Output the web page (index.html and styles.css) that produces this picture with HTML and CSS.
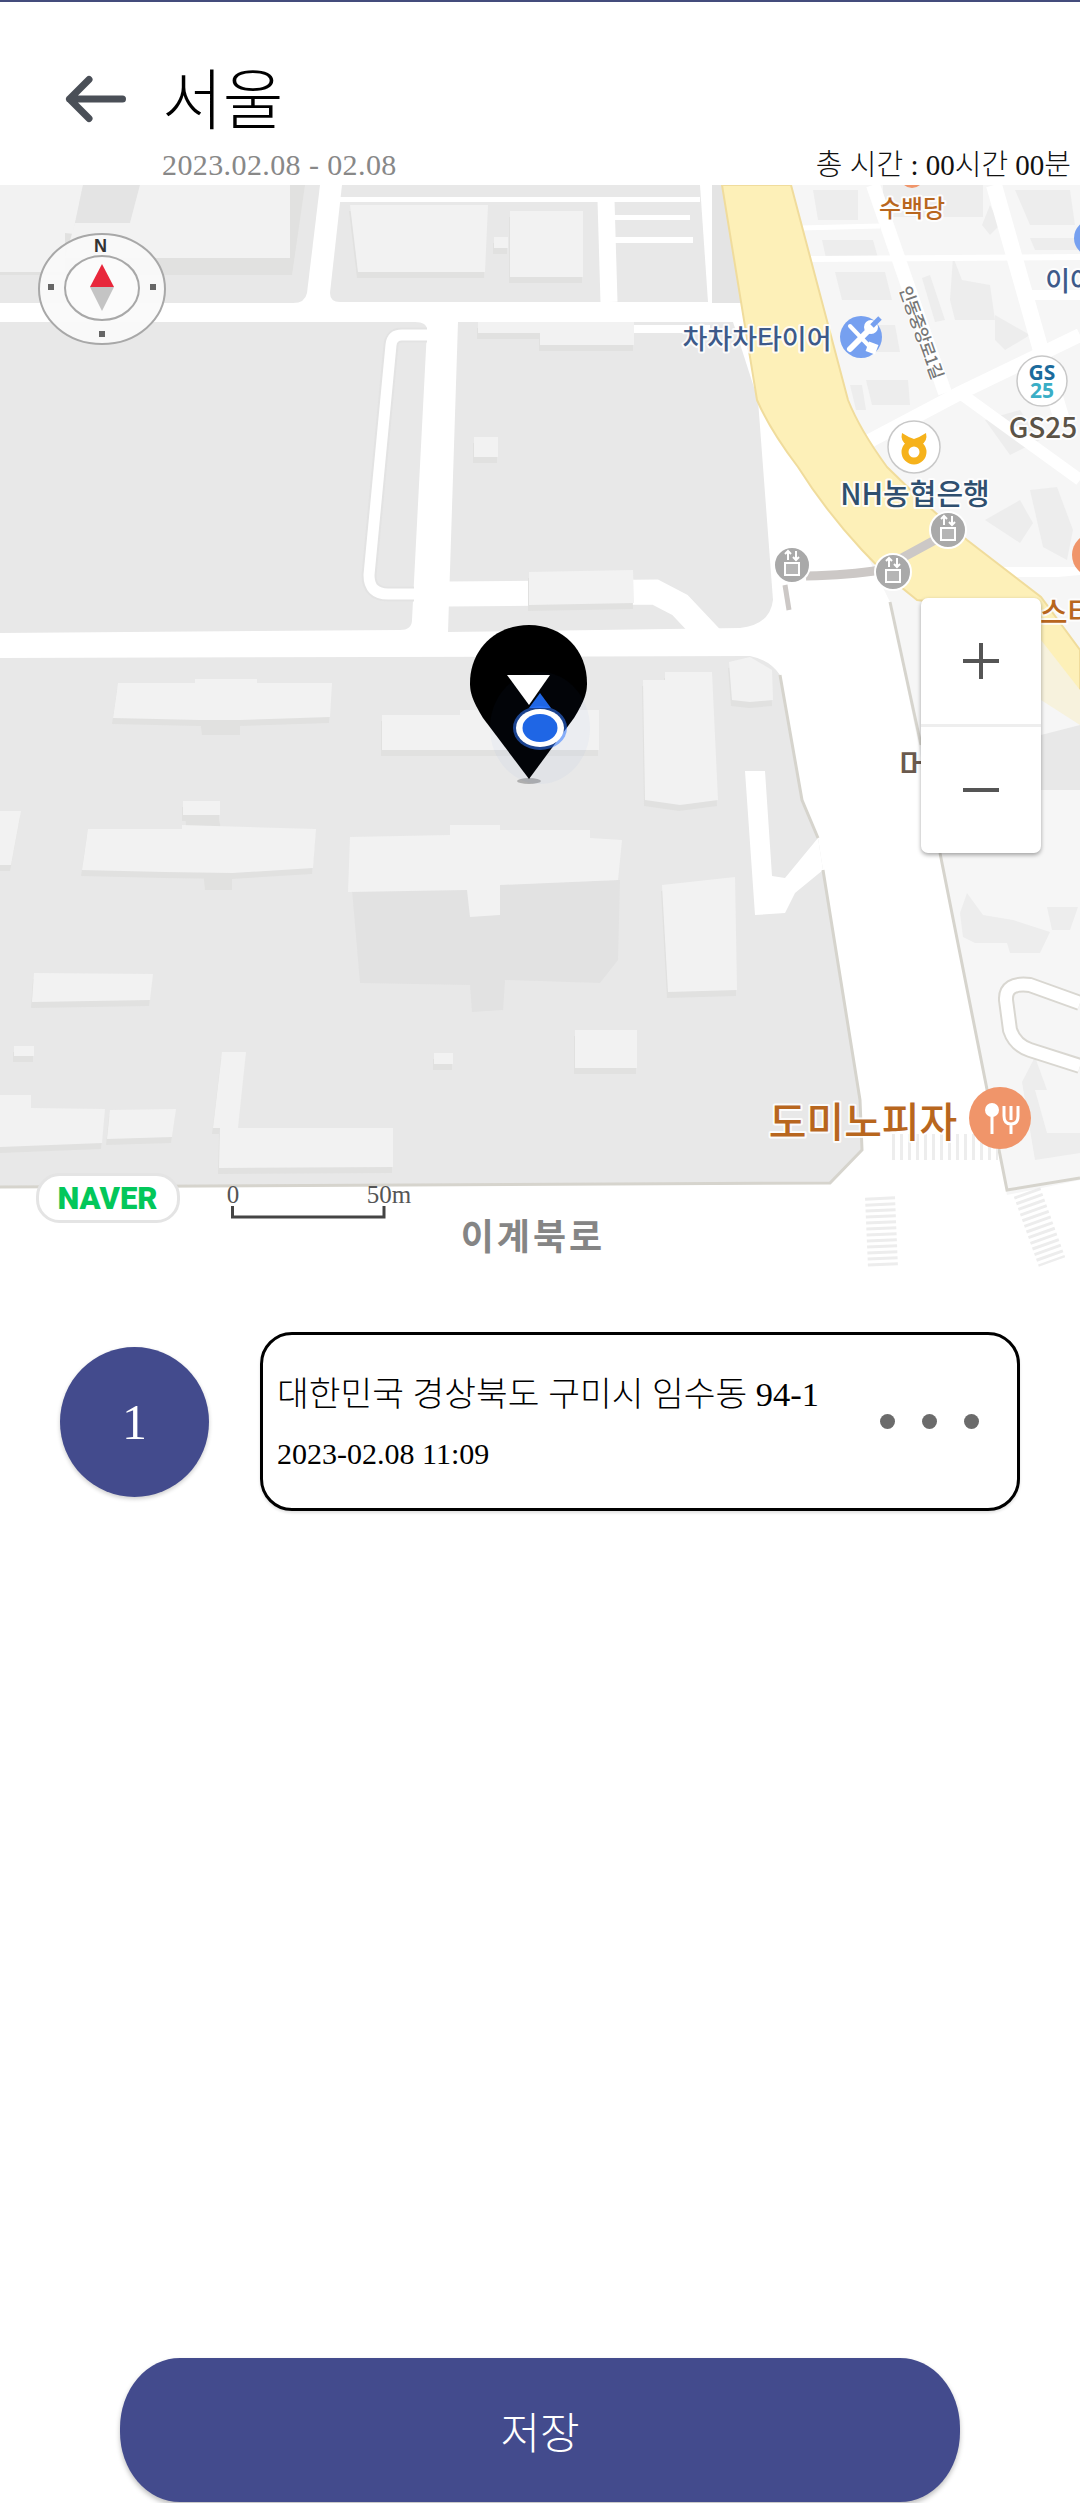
FILE: index.html
```html
<!DOCTYPE html>
<html lang="ko">
<head>
<meta charset="utf-8">
<title>서울</title>
<link rel="stylesheet" href="styles.css">
</head>
<body>
<div class="page">
  <header class="header">
    <div class="head-top">
      <svg class="back" viewBox="0 0 66 54" width="66" height="54"><path d="M6.500 27H59.500M26 7.500L6.500 27L26 46.500"/></svg>
      <h1 class="title">서울</h1>
    </div>
    <div class="head-sub">
      <span class="date">2023.02.08 - 02.08</span>
      <span class="total">총 시간 : 00시간 00분</span>
    </div>
  </header>

  <section class="map">
    <svg class="map-svg" viewBox="0 185 1080 1085" width="1080" height="1085">
      <defs>
        <g id="bds">
          <polygon points="118,683 195,683 195,679 257,679 257,683 332,683 330,717 240,720 200,720 113,718"/>
          <polygon points="382,715 460,715 460,710 599,710 599,750 382,750"/>
          <polygon points="183,801 220,801 220,815 183,815"/>
          <polygon points="88,829 182,829 182,825 316,829 313,868 232,873 165,872 82,870"/>
          <polygon points="0,811 21,811 11,865 0,865"/>
          <polygon points="643,680 665,680 665,672 712,672 718,800 680,805 645,800"/>
          <polygon points="729,662 750,657 772,670 773,700 750,702 732,700"/>
          <polygon points="662,885 735,877 737,990 668,992"/>
          <polygon points="34,973 153,974 150,1000 32,1002"/>
          <polygon points="14,1046 34,1046 34,1056 14,1056"/>
          <polygon points="434,1053 453,1053 453,1064 434,1064"/>
          <polygon points="575,1030 637,1030 637,1068 575,1068"/>
          <polygon points="222,1052 246,1052 238,1128 213,1128"/>
          <polygon points="0,1095 31,1095 31,1108 105,1109 102,1143 0,1147"/>
          <polygon points="110,1110 176,1109 172,1137 107,1139"/>
          <polygon points="220,1128 393,1128 393,1167 219,1168"/>
          <polygon points="474,437 498,437 498,457 474,457"/>
          <polygon points="529,572 633,570 634,603 529,605"/>
          <polygon points="478,322 634,322 634,345 540,345 540,333 478,333"/>
          <polygon points="350,205 488,205 485,272 358,272"/>
          <polygon points="510,211 583,211 583,277 560,277 510,277"/>
          <polygon points="494,237 508,237 508,248 494,248"/>
        </g>
        <g id="xfer">
          <circle class="xf-c" r="18"/>
          <rect class="xf-b" x="-7" y="-2" width="14" height="12"/>
          <path class="xf-a" d="M-4 -5V-14M-7 -11L-4 -14L-1 -11M4 -14V-5M1 -8L4 -5L7 -8"/>
        </g>
      </defs>

      <!-- blocks -->
      <path class="block" d="M0 185H320L307 293Q305 303 293 303H0Z"/>
      <path class="block" d="M342 185H700L708 302H340Q330 302 330 293Z"/>
      <rect class="strip" x="712" y="185" width="30" height="118"/>
      <path class="block" d="M0 322H415Q427 322 427 330L412 620Q412 630 400 630L0 633Z"/>
      <path class="block" d="M458 322H733L758 400L773 600Q770 625 740 628L448 632Z"/>
      <path class="block" d="M0 658L750 656Q770 660 780 675L802 800L818 838L823 870L860 1100L862 1150L830 1183L0 1186Z"/>

      <!-- left upper building -->
      <polygon class="bld" points="0,185 83,185 65,272 0,272"/>
      <polygon class="strip" points="83,185 140,185 130,223 75,223"/>
      <polygon class="shade" points="65,233 290,258 290,275 0,275 0,272 65,272"/>
      <polygon class="shade" points="290,185 305,185 292,275 285,275"/>
      <polygon class="bld" points="140,185 290,185 290,258 65,258 75,223 130,223"/>

      <!-- right district -->
      <polygon class="light" points="791,185 1080,185 1080,1180 1007,1195 940,853 890,602 800,420"/>
      <g class="grey">
        <rect x="883" y="185" width="100" height="32"/>
        <polygon points="813,190 858,190 858,220 818,220"/>
        <polygon points="822,240 873,240 878,258 826,258"/>
        <polygon points="835,272 885,272 892,300 842,300"/>
        <polygon points="848,325 895,325 900,352 855,352"/>
        <polygon points="866,380 908,380 910,405 872,405"/>
        <polygon points="850,385 862,385 866,410 856,410"/>
        <polygon points="953,257 962,280 990,285 995,320 955,320 950,300"/>
        <polygon points="930,275 945,320 935,322 922,278"/>
        <polygon points="995,315 1030,335 1005,350 995,340"/>
        <polygon points="990,205 1000,225 990,235 982,225"/>
        <polygon points="1015,190 1070,190 1075,225 1030,225"/>
        <polygon points="1030,238 1080,238 1080,250 1035,250"/>
        <polygon points="985,420 1020,410 1040,440 1010,455"/>
        <polygon points="1030,490 1057,487 1073,530 1067,560 1043,547"/>
        <polygon points="985,520 1020,500 1033,523 1020,543"/>
        <polygon points="960,913 967,893 983,915 1013,920 1050,932 1040,953 1010,953 1007,943 975,943 963,937"/>
        <polygon points="1047,907 1078,907 1070,930 1052,930"/>
        <polygon points="1022,1082 1035,1057 1047,1090 1035,1090 1047,1133 1080,1133 1080,1153 1035,1160"/>
      </g>
      <polygon class="block" points="1041,735 1080,725 1080,790 1041,790"/>
      <g class="road">
        <path class="r14" d="M873 185L945 393"/>
        <path class="r16" d="M994 185L1040 347L1062 420"/>
        <path class="r5" d="M800 228L880 226"/>
        <path class="r6" d="M810 259L1080 257"/>
        <path class="r10" d="M1030 295H1080"/>
        <path class="r14" d="M858 447L960 393L1080 335"/>
        <path class="r12" d="M960 393L1080 480"/>
        <path class="r10" d="M1000 572H1080"/>
      </g>
      <polygon class="light" points="1047,578 1080,575 1080,625 1050,625"/>
      <path class="loop-e" d="M1080 1003L1030 985Q1005 982 1006 1000L1010 1030Q1015 1045 1030 1050L1080 1066"/>
      <path class="loop" d="M1080 1003L1030 985Q1005 982 1006 1000L1010 1030Q1015 1045 1030 1050L1080 1066"/>

      <!-- yellow arterial -->
      <path class="yellow" d="M722 185H791L848 400Q860 430 887 467Q925 505 967 540L1041 597L1080 650V700L1000 610L917 600Q885 575 862 550Q825 510 798 467Q770 430 757 400Z"/>
      <polygon class="pale" points="1041,640 1080,690 1080,725 1041,700"/>

      <!-- white roads over blocks -->
      <g class="road">
        <path class="r5" d="M340 199.500H700"/>
        <path class="r17" d="M606 200L609 302"/>
        <path class="r5" d="M610 217.500H690"/>
        <path class="r6" d="M610 240H693"/>
        <path class="r8" d="M634 329H710"/>
      </g>
      <path class="narrow-e" d="M427 335H402Q392 335 391 345L369 575Q369 594 388 594H414"/>
      <path class="narrow" d="M427 335H402Q392 335 391 345L369 575Q369 594 388 594H414"/>
      <path class="wide" d="M448 594L655 592L680 605L713 640"/>
      <polygon class="white" points="745,771 765,771 772,876 785,878 818,838 823,870 795,893 785,913 755,915"/>

      <!-- buildings -->
      <use class="shade" href="#bds" transform="translate(-1 6)"/>
      <polygon class="shade" points="200,720 240,720 240,735 202,735"/>
      <polygon class="shade" points="185,815 218,815 224,843 188,843"/>
      <polygon class="shade" points="203,870 232,870 232,890 205,890"/>
      <polygon class="dark" points="352,890 620,880 618,960 600,983 505,980 503,1010 472,1012 470,985 360,983"/>
      <use class="bld" href="#bds"/>
      <polygon class="bld" points="350,837 450,835 450,825 500,825 500,830 590,830 590,838 622,840 618,880 500,885 500,915 470,917 467,890 348,892"/>

      <!-- edges -->
      <path class="edge" d="M823 870L860 1100L862 1150L830 1183L0 1187"/>
      <path class="edge" d="M940 853L1007 1190L1080 1178"/>
      <path class="edge" d="M780 675L802 800L818 838"/>
      <path class="edge" d="M890 602L921 745"/>
      <path class="edge-t" d="M785 585L789 610"/>

      <!-- crossings -->
      <path class="cross-v" d="M892 1147H998"/>
      <path class="cross-h" d="M880 1197L883 1268"/>
      <path class="cross-d" d="M1027 1192L1052 1262"/>

      <!-- poi -->
      <circle class="orange" cx="912" cy="176" r="12"/>
      <circle class="bluepoi" cx="1092" cy="238" r="18"/>
      <circle class="orange" cx="1094" cy="555" r="22"/>
      <path class="xfer-line" d="M806 576Q850 575 880 570L935 540"/>
      <use href="#xfer" x="792" y="565"/>
      <use href="#xfer" x="893" y="572"/>
      <use href="#xfer" x="948" y="530"/>

      <circle class="bluepoi" cx="861" cy="337" r="21"/>
      <path class="tool-s" d="M850 326L870 347"/>
      <path class="tool" d="M850 349L868 331"/>
      <circle class="wfill" cx="871" cy="327" r="7"/>
      <path class="tool-n" d="M872 326L880 318"/>
      <rect class="wfill" x="867" y="343" width="10" height="10" transform="rotate(20 872 348)"/>

      <circle class="poi-w" cx="1042" cy="381" r="25"/>
      <text class="gs1" x="1042" y="380">GS</text>
      <text class="gs2" x="1042" y="398">25</text>

      <circle class="poi-w" cx="914" cy="447" r="26"/>
      <circle class="nh" cx="914" cy="452" r="9"/>
      <path class="nh-f" d="M902 433Q908 437 914 439Q920 437 926 433Q928 441 921 445H907Q900 441 902 433Z"/>

      <circle class="orange" cx="1000" cy="1118" r="31"/>
      <ellipse class="wfill" cx="992" cy="1110" rx="7" ry="7"/>
      <path class="wline" d="M992 1112V1134M1011 1124V1134M1004 1106V1116Q1004 1124 1011 1124Q1018 1124 1018 1116V1106M1011 1106V1120"/>

      <!-- labels -->
      <text class="lbl org s23" x="912" y="217">수백당</text>
      <text class="lbl nav s25" x="757" y="349">차차차타이어</text>
      <text class="lbl nav s25" x="1070" y="291">이어</text>
      <text class="lbl road-n" transform="translate(899 289) rotate(70)">인동중앙로1길</text>
      <text class="lbl brn s29" x="1043" y="438">GS25</text>
      <text class="lbl nh-t s28" x="915" y="505">NH농협은행</text>
      <text class="lbl org s28l" x="1040" y="623">스타</text>
      <text class="lbl brn2 s30l" x="899" y="778">머</text>
      <text class="lbl org s40" x="863" y="1137">도미노피자</text>
      <text class="lbl grn" x="533" y="1250">이계북로</text>

      <!-- marker -->
      <ellipse class="pin-sh" cx="529" cy="781" rx="12" ry="3"/>
      <path class="pin" d="M529 779L483 718C472 700 470 692 470 683C470 650 495 625 529 625C563 625 587 650 587 683C587 692 585 700 574 718Z"/>
      <ellipse class="halo" cx="540" cy="728" rx="50" ry="56"/>
      <polygon class="blue" points="540,693 551,708 529,708"/>
      <polygon class="wfill" points="507,675 550,675 529,705"/>
      <ellipse class="glow" cx="540" cy="728" rx="27" ry="22"/>
      <ellipse class="wfill" cx="540" cy="728" rx="24" ry="19"/>
      <ellipse class="blue" cx="540" cy="728" rx="17.500" ry="14"/>

      <!-- compass -->
      <ellipse class="cmp-o" cx="102" cy="289" rx="63" ry="55"/>
      <ellipse class="cmp-i" cx="102" cy="288" rx="37" ry="32"/>
      <text class="cmp-n" x="100.500" y="252">N</text>
      <polygon class="red" points="102,264 114,287 90,287"/>
      <polygon class="gry" points="90,287 114,287 102,311"/>
      <rect class="cmp-d" x="48" y="284" width="6" height="6"/>
      <rect class="cmp-d" x="150" y="284" width="6" height="6"/>
      <rect class="cmp-d" x="99" y="331" width="6" height="6"/>

      <!-- logo + scale -->
      <rect class="nv-p" x="37.500" y="1174.500" width="141" height="47" rx="22"/>
      <text class="nv-t" x="107.500" y="1209">NAVER</text>
      <text class="sc-t" x="233" y="1203">0</text>
      <text class="sc-t" x="389" y="1203">50m</text>
      <path class="sc-l" d="M232.500 1206V1217H384V1206"/>
    </svg>
    <div class="zoom">
      <button class="zoom-btn"><svg viewBox="0 0 36 36" width="36" height="36"><path d="M0 18H36M18 0V36"/></svg></button>
      <button class="zoom-btn"><svg viewBox="0 0 36 4" width="36" height="4"><path d="M0 2H36"/></svg></button>
    </div>
  </section>

  <section class="list">
    <div class="num">1</div>
    <div class="card">
      <div class="card-text">
        <div class="addr">대한민국 경상북도 구미시 임수동 94-1</div>
        <div class="when">2023-02.08 11:09</div>
      </div>
      <div class="dots"><i></i><i></i><i></i></div>
    </div>
  </section>

  <div class="foot">
    <button class="save">저장</button>
  </div>
</div>
</body>
</html>
```
FILE: styles.css
```css
* { box-sizing: border-box; }
html, body { margin: 0; padding: 0; background: #fff; }
body { font-family: "Liberation Serif", "Noto Sans CJK KR", serif; color: #000; }
.page { width: 1080px; height: 2503px; display: flex; flex-direction: column; overflow: hidden; }

/* header */
.header { height: 185px; border-top: 2px solid #444c7c; display: flex; flex-direction: column; }
.head-top { display: flex; align-items: center; height: 135px; padding: 58px 0 0 63px; }
.back { fill: none; stroke: #4a4f57; stroke-width: 7; stroke-linecap: round; stroke-linejoin: round; }
.title { margin: 7px 0 0 33px; font-size: 66px; font-weight: 300; line-height: 70px; }
.head-sub { display: flex; justify-content: space-between; align-items: center; padding: 12px 9px 0 162px; font-size: 30px; line-height: 32px; font-weight: 300; }
.date { color: #888; letter-spacing: .4px; }
.total { color: #111; font-size: 29px; }

/* map */
.map { position: relative; height: 1085px; overflow: hidden; background: #fff; }
.map-svg { display: block; }
.block { fill: #e8e8e8; }
.strip { fill: #e4e4e4; }
.bld { fill: #f2f2f2; }
.shade { fill: #e1e1e0; }
.dark { fill: #e2e2e2; }
.light { fill: #f6f6f6; }
.grey { fill: #ededed; }
.white { fill: #fff; }
.yellow { fill: #fdf0b8; stroke: #f0dc9c; stroke-width: 2; }
.pale { fill: #f7f2dd; }
.road { fill: none; stroke: #fff; }
.r5 { stroke-width: 5; } .r6 { stroke-width: 6; } .r8 { stroke-width: 8; }
.r10 { stroke-width: 10; } .r12 { stroke-width: 12; } .r14 { stroke-width: 14; }
.r16 { stroke-width: 16; } .r17 { stroke-width: 17; }
.narrow { fill: none; stroke: #fff; stroke-width: 11; }
.narrow-e { fill: none; stroke: #e3e3e3; stroke-width: 15; }
.wide { fill: none; stroke: #fff; stroke-width: 25; }
.loop { fill: none; stroke: #fff; stroke-width: 12; }
.loop-e { fill: none; stroke: #d9d7d1; stroke-width: 16; }
.edge { fill: none; stroke: #d6d4cd; stroke-width: 3; }
.edge-t { fill: none; stroke: #ccc8c6; stroke-width: 5; }
.cross-v { fill: none; stroke: #ededed; stroke-width: 26; stroke-dasharray: 3 5; }
.cross-h { fill: none; stroke: #ededed; stroke-width: 30; stroke-dasharray: 3 3; }
.cross-d { fill: none; stroke: #ededed; stroke-width: 28; stroke-dasharray: 3 3; }

.orange { fill: #f0956a; }
.bluepoi { fill: #76a0f0; }
.xfer-line { fill: none; stroke: #ccc8c6; stroke-width: 9; }
.xf-c { fill: #a9a9a9; stroke: #fff; stroke-width: 2; }
.xf-b { fill: #b5b5b5; stroke: #fff; stroke-width: 2; }
.xf-a { fill: none; stroke: #fff; stroke-width: 2; }
.tool { fill: none; stroke: #fff; stroke-width: 6; stroke-linecap: round; }
.tool-s { fill: none; stroke: #fff; stroke-width: 4; stroke-linecap: round; }
.tool-n { fill: none; stroke: #76a0f0; stroke-width: 5; }
.poi-w { fill: #fff; stroke: #c8c8c8; stroke-width: 1.500; }
.gs1, .gs2 { font-family: "Noto Sans", sans-serif; font-weight: 700; font-size: 21px; text-anchor: middle; }
.gs1 { fill: #1b6b9c; }
.gs2 { fill: #3aaec6; }
.nh { fill: #fff; stroke: #f6b21b; stroke-width: 7; }
.nh-f { fill: #f6b21b; }
.wfill { fill: #fff; }
.wline { fill: none; stroke: #fff; stroke-width: 3; }

.lbl { font-family: "Noto Sans CJK KR", "Noto Sans", sans-serif; text-anchor: middle; paint-order: stroke; stroke: rgba(255,255,255,.85); stroke-width: 4px; stroke-linejoin: round; font-weight: 500; }
.org { fill: #b8661e; }
.nav { fill: #3d5a8a; }
.brn { fill: #5b5347; }
.brn2 { fill: #6a5a4e; }
.nh-t { fill: #2f4f6f; }
.grn { fill: #858585; font-size: 36px; letter-spacing: 3px; font-weight: 700; }
.s23 { font-size: 24px; }
.s25 { font-size: 27px; }
.s28 { font-size: 29px; }
.s29 { font-size: 28px; }
.s28l { font-size: 30px; text-anchor: start; }
.s30l { font-size: 34px; text-anchor: start; }
.s40 { font-size: 41px; }
.road-n { fill: #777; font-size: 17px; text-anchor: start; stroke-width: 2px; letter-spacing: -1px; }

.pin { fill: #000; }
.pin-sh { fill: rgba(0,0,0,.25); }
.halo { fill: rgba(60,120,240,.035); }
.glow { fill: rgba(50,120,255,.55); }
.blue { fill: #1f66e5; }

.cmp-o { fill: rgba(250,250,250,.92); stroke: #a8a8a8; stroke-width: 2; }
.cmp-i { fill: #fbfbfb; stroke: #a8a8a8; stroke-width: 2; }
.cmp-n { font-family: "Liberation Sans", sans-serif; font-weight: 700; font-size: 18px; fill: #333; text-anchor: middle; }
.cmp-d { fill: #666; }
.red { fill: #e8273b; }
.gry { fill: #c4c4c4; }

.nv-p { fill: #fff; stroke: #e4e4e4; stroke-width: 3; }
.nv-t { font-family: "Roboto", "Liberation Sans", sans-serif; font-weight: 900; font-size: 31px; fill: #03c75a; text-anchor: middle; }
.sc-t { font-family: "Liberation Serif", serif; font-size: 25px; fill: #555; text-anchor: middle; }
.sc-l { fill: none; stroke: #444; stroke-width: 3; }

.zoom { position: absolute; left: 921px; top: 413px; width: 120px; height: 255px; background: #fff; border-radius: 7px; box-shadow: 0 2px 4px rgba(0,0,0,.35); display: flex; flex-direction: column; }
.zoom-btn { flex: 1; border: 0; padding: 0; background: none; display: flex; align-items: center; justify-content: center; }
.zoom-btn + .zoom-btn { border-top: 3px solid #eee; }
.zoom-btn svg { display: block; fill: none; stroke: #555; stroke-width: 4; }

/* list */
.list { display: flex; align-items: center; gap: 51px; padding: 62px 0 0 60px; }
.num { width: 149px; height: 150px; border-radius: 50%; background: #434b8d; color: #fff; display: flex; align-items: center; justify-content: center; font-size: 50px; box-shadow: 0 2px 4px rgba(0,0,0,.2); }
.card { width: 760px; height: 179px; border: 3px solid #000; border-radius: 32px; padding: 0 38px 0 14px; display: flex; align-items: center; justify-content: space-between; box-shadow: 0 2px 3px rgba(0,0,0,.12); background: #fff; }
.addr { font-size: 34.5px; line-height: 40px; font-weight: 300; }
.when { font-size: 30px; line-height: 32px; margin-top: 24px; font-weight: 300; }
.dots { display: flex; gap: 27px; }
.dots i { display: block; width: 15px; height: 15px; border-radius: 50%; background: #6b6b6b; }

/* footer */
.foot { flex: 1; display: flex; align-items: flex-end; justify-content: center; padding-bottom: 1px; }
.save { width: 840px; height: 144px; border: 0; border-radius: 60px / 70px; background: #434b8d; color: #fff; font-family: inherit; font-size: 43px; font-weight: 300; box-shadow: 0 3px 5px rgba(0,0,0,.25); }
```
